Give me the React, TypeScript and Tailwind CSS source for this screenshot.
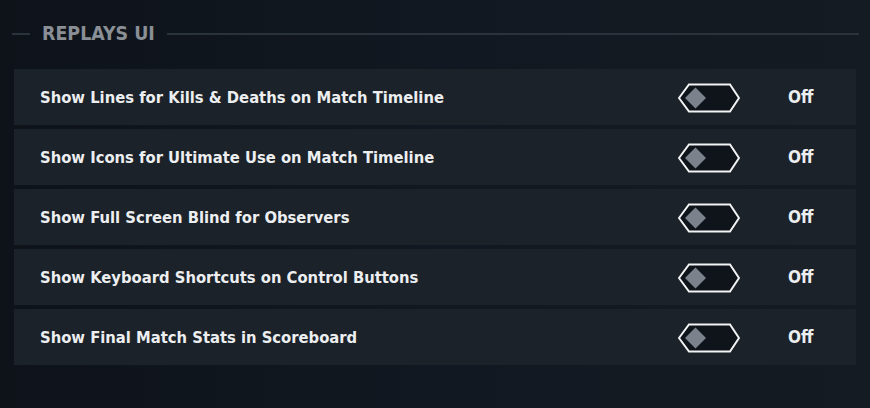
import React from 'react'

const SETTINGS = [
  'Show Lines for Kills & Deaths on Match Timeline',
  'Show Icons for Ultimate Use on Match Timeline',
  'Show Full Screen Blind for Observers',
  'Show Keyboard Shortcuts on Control Buttons',
  'Show Final Match Stats in Scoreboard',
]

function HexToggle() {
  return (
    <svg width="62" height="30" viewBox="0 0 62 30" className="block">
      <polygon
        points="1,15 11,1.5 52,1.5 61,15 52,28.5 11,28.5"
        fill="#0f141b"
        stroke="#f2f3f4"
        strokeWidth="2"
        strokeLinejoin="miter"
      />
      <polygon points="17.5,4.5 28,15 17.5,25.5 7,15" fill="#7b828b" />
    </svg>
  )
}

function SettingRow({ label }: { label: string }) {
  return (
    <div className="flex h-[56px] items-center bg-[#1b2229] pl-[26px]">
      <span className="flex-1 pt-[2px] text-[16.45px] font-bold text-[#eceef0]">{label}</span>
      <div className="w-[60px] mr-[48px] pt-[1px]">
        <HexToggle />
      </div>
      <span className="w-[70px] pl-[2px] pt-[2px] text-[17px] font-bold text-[#eceef0]">Off</span>
    </div>
  )
}

export default function App() {
  return (
    <div
      className="h-[408px] w-[870px] overflow-hidden bg-gradient-to-r from-[#0e131a] via-[#121821] to-[#141b23] pt-[22px]"
      style={{ fontFamily: '"DejaVu Sans Condensed", "DejaVu Sans", sans-serif' }}
    >
      <div className="flex items-center pl-[12px] pr-[11px]">
        <div className="h-[2px] w-[18px] bg-[#2a323b]" />
        <span className="px-[12px] text-[19.4px] font-bold uppercase leading-[24px] text-[#8a8f96]">
          Replays UI
        </span>
        <div className="h-[2px] flex-1 bg-[#2a323b]" />
      </div>
      <div className="mt-[23px] ml-[14px] mr-[14px] flex flex-col gap-[4px]">
        {SETTINGS.map((s) => (
          <SettingRow key={s} label={s} />
        ))}
      </div>
    </div>
  )
}
